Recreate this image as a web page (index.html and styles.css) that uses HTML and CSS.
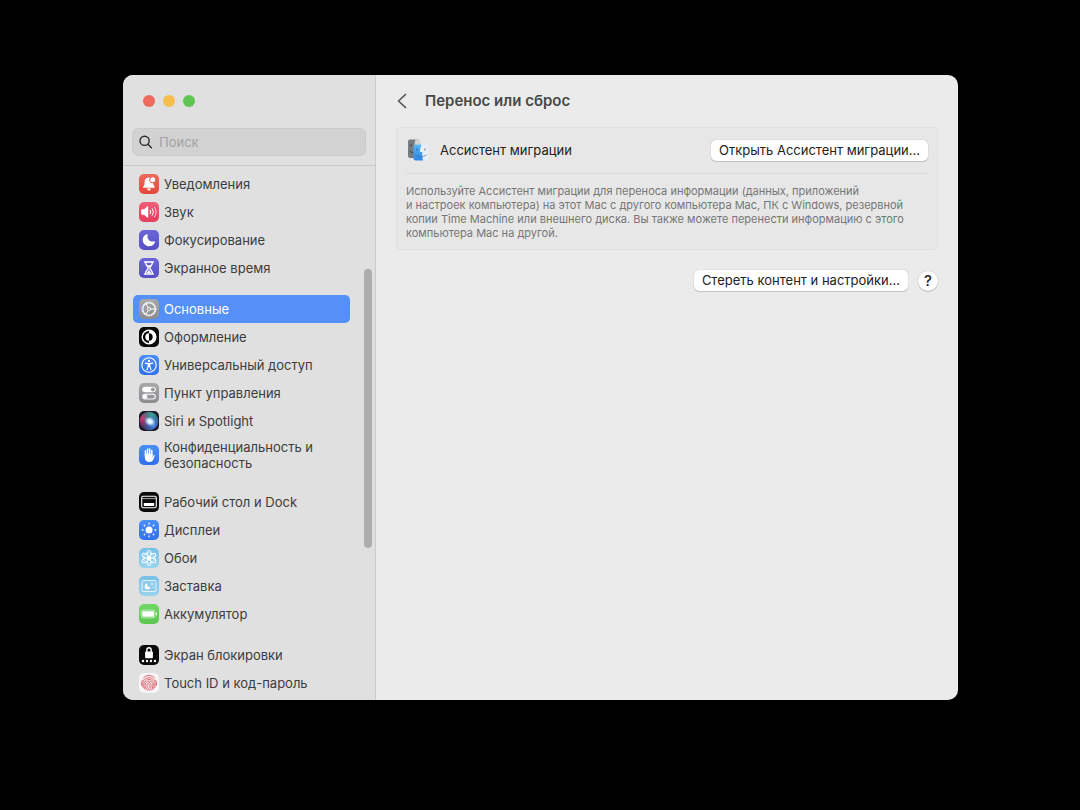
FILE: index.html
```html
<!DOCTYPE html>
<html lang="ru">
<head>
<meta charset="utf-8">
<title>Перенос или сброс</title>
<link rel="stylesheet" href="styles.css">
</head>
<body>
<svg class="defs" width="0" height="0" aria-hidden="true">
  <defs>
    <linearGradient id="face" x1="0" y1="0" x2="0" y2="1"><stop offset="0" stop-color="#56b6f5"/><stop offset="1" stop-color="#2f86e6"/></linearGradient>
    <radialGradient id="siriA" cx="0.15" cy="0.35" r="0.6"><stop offset="0" stop-color="#d8326f"/><stop offset="1" stop-color="#d8326f" stop-opacity="0"/></radialGradient>
    <radialGradient id="siriB" cx="0.75" cy="0.75" r="0.6"><stop offset="0" stop-color="#4a86e8"/><stop offset="1" stop-color="#4a86e8" stop-opacity="0"/></radialGradient>
    <radialGradient id="siriC" cx="0.65" cy="0.15" r="0.6"><stop offset="0" stop-color="#3aa89c"/><stop offset="1" stop-color="#3aa89c" stop-opacity="0"/></radialGradient>
    <radialGradient id="siriD"><stop offset="0" stop-color="#fff"/><stop offset="0.4" stop-color="#d7efff"/><stop offset="1" stop-color="#8fd0ff" stop-opacity="0"/></radialGradient>
  </defs>
</svg>
<div class="window">
  <aside class="sidebar">
    <div class="lights">
      <button class="light red" aria-label="Закрыть"></button>
      <button class="light yellow" aria-label="Свернуть"></button>
      <button class="light green" aria-label="Развернуть"></button>
    </div>
    <label class="search">
      <svg width="14" height="14" viewBox="0 0 14 14" fill="none" stroke="#2b2b2b" stroke-width="1.4" stroke-linecap="round"><circle cx="5.6" cy="5.8" r="4.600"/><path d="M9 9.300 12.400 12.700"/></svg>
      <input type="text" placeholder="Поиск" aria-label="Поиск">
    </label>
    <nav class="list">
      <div class="group">
        <a class="item" href="#"><span class="icon i-red"><svg viewBox="0 0 20 20"><path fill="#fff" d="M9.600 3.400c-2.800.2-4 2.200-4 4.600 0 2.600-.5 3.600-1.500 4.800-.3.4-.1.9.4.9h10.800c.5 0 .7-.5.4-.9-.8-1-1.300-1.900-1.400-3.600a3.400 3.400 0 0 1-4.100-3.400c0-.9.2-1.600.7-2.200a5 5 0 0 0-1.300-.2zM8 14.600h4c-.2 1.200-1 1.900-2 1.900s-1.800-.7-2-1.900z"/><circle cx="13.700" cy="5.700" r="2.500" fill="#fff"/></svg></span><span>Уведомления</span></a>
        <a class="item" href="#"><span class="icon i-pink"><svg viewBox="0 0 20 20" fill="none" stroke="#fff" stroke-width="1" stroke-linecap="round"><path fill="#fff" stroke="none" d="M2.200 8c0-.5.3-.8.8-.8h2L8.300 4.500c.4-.3.9-.1.9.4v10.200c0 .5-.5.7-.9.400L5 12.800H3c-.5 0-.8-.3-.8-.8z"/><path d="M11.200 8.200a3 3 0 0 1 0 3.600M13.300 6.700a5.500 5.500 0 0 1 0 6.600"/><path stroke-opacity=".75" d="M15.500 5.300a8 8 0 0 1 0 9.400"/></svg></span><span>Звук</span></a>
        <a class="item" href="#"><span class="icon i-violet"><svg viewBox="0 0 20 20"><path fill="#fff" d="M8.200 3.900c.3-.1.600.2.500.5-1.200 4.200 1.900 7.900 6.800 7 .4-.1.700.2.500.6a6.300 6.300 0 1 1-7.800-8.100z"/></svg></span><span>Фокусирование</span></a>
        <a class="item" href="#"><span class="icon i-violet"><svg viewBox="0 0 20 20" fill="none" stroke="#fff" stroke-width="1.300" stroke-linecap="round"><path d="M5.500 4h9M5.500 16h9M6.500 4.300c0 3 2.600 4 2.600 5.700s-2.600 2.700-2.600 5.700M13.500 4.300c0 3-2.600 4-2.600 5.700s2.600 2.700 2.600 5.700"/><path fill="#fff" stroke="none" d="M7.600 7.200h4.800L10.300 9.600v3l2 2.400H7.700l2-2.400v-3z"/></svg></span><span>Экранное время</span></a>
      </div>
      <div class="group">
        <a class="item selected" href="#" aria-current="page"><span class="icon i-gray"><svg viewBox="0 0 20 20" fill="none" stroke="#fff"><circle cx="10" cy="10" r="7.100" stroke-width="1" stroke-dasharray="1.100 .79"/><circle cx="10" cy="10" r="6.200" stroke-width="1.100"/><circle cx="10" cy="10" r="1.600" stroke-width=".9"/><path stroke-width="1" d="M11.700 10h4.500M9.100 8.500 6.900 4.700M9.100 11.500l-2.200 3.800"/></svg></span><span>Основные</span></a>
        <a class="item" href="#"><span class="icon i-black"><svg viewBox="0 0 20 20"><circle cx="10" cy="10" r="6.800" fill="#000" stroke="#fff" stroke-width="1.500"/><path fill="#fff" d="M10 3.500a6.500 6.500 0 0 1 0 13v-2.800a3.700 3.700 0 0 0 0-7.400z"/><path fill="#fff" d="M10 6.300a3.700 3.700 0 0 0 0 7.400z"/></svg></span><span>Оформление</span></a>
        <a class="item" href="#"><span class="icon i-blue"><svg viewBox="0 0 20 20" fill="none" stroke="#fff"><circle cx="10" cy="10" r="7.200" stroke-width="1.100"/><circle cx="10" cy="6" r="1.200" fill="#fff" stroke="none"/><path stroke-width="1.200" stroke-linecap="round" stroke-linejoin="round" d="M6.300 8.100 9 8.700h2l2.700-.6M9.200 8.700v2.700l-1.200 3.400M10.800 8.700v2.700l1.200 3.400M10 9v2.300"/></svg></span><span>Универсальный доступ</span></a>
        <a class="item" href="#"><span class="icon i-gray"><svg viewBox="0 0 20 20"><rect x="3.200" y="3.700" width="13.600" height="5.600" rx="2.800" fill="#fff"/><circle cx="13.800" cy="6.500" r="1.900" fill="#98989b"/><rect x="3.700" y="11.200" width="12.600" height="4.800" rx="2.400" fill="none" stroke="#fff" stroke-width="1.100"/><circle cx="6.300" cy="13.600" r="2.200" fill="#fff"/></svg></span><span>Пункт управления</span></a>
        <a class="item" href="#"><span class="icon i-siri"><svg viewBox="0 0 20 20"><circle cx="10" cy="10" r="9.300" fill="#2c3358"/><circle cx="10" cy="10" r="9.300" fill="url(#siriA)"/><circle cx="10" cy="10" r="9.300" fill="url(#siriC)"/><circle cx="10" cy="10" r="9.300" fill="url(#siriB)"/><ellipse cx="11" cy="10.500" rx="6" ry="4.800" transform="rotate(25 11 10.500)" fill="url(#siriD)"/></svg></span><span>Siri и Spotlight</span></a>
        <a class="item tall" href="#"><span class="icon i-blue"><svg viewBox="0 0 20 20" fill="none" stroke="#fff" stroke-linecap="round"><path stroke-width="1.500" d="M6.500 10V5.800M8.600 9V4.100M10.700 9V4.100M12.800 10V5.500"/><path fill="#fff" stroke="none" d="M5.800 8.800h7.800v3.400l.9-1.800c.4-.7 1.500-.3 1.200.6l-1.700 4c-.6 1.300-1.700 2-3.500 2-3 0-4.700-1.500-4.700-4.700z"/></svg></span><span>Конфиденциальность и безопасность</span></a>
      </div>
      <div class="group">
        <a class="item" href="#"><span class="icon i-black"><svg viewBox="0 0 20 20"><rect x="2.700" y="4.200" width="14.600" height="11.600" rx="1.500" fill="none" stroke="#fff" stroke-width="1.100"/><path stroke="#fff" stroke-opacity=".7" stroke-width=".9" d="M3 6.600h14"/><rect x="4.800" y="11" width="10.400" height="3" rx=".6" fill="#fff"/></svg></span><span>Рабочий стол и Dock</span></a>
        <a class="item" href="#"><span class="icon i-blue"><svg viewBox="0 0 20 20"><circle cx="10" cy="10" r="3.500" fill="#fff"/><path stroke="#fff" stroke-width="1.300" stroke-linecap="round" d="M10 3.200v.8M10 16v.8M3.200 10h.8M16 10h.8M5.200 5.200l.6.6M14.200 14.200l.6.6M5.200 14.800l.6-.6M14.200 5.800l.6-.6"/></svg></span><span>Дисплеи</span></a>
        <a class="item" href="#"><span class="icon i-sky"><svg viewBox="0 0 20 20" fill="none" stroke="#fff" stroke-width=".9"><circle cx="10" cy="10" r="1.500" fill="#fff"/><ellipse cx="10" cy="5.300" rx="2.100" ry="2.900"/><ellipse cx="10" cy="5.300" rx="2.100" ry="2.900" transform="rotate(60 10 10)"/><ellipse cx="10" cy="5.300" rx="2.100" ry="2.900" transform="rotate(120 10 10)"/><ellipse cx="10" cy="5.300" rx="2.100" ry="2.900" transform="rotate(180 10 10)"/><ellipse cx="10" cy="5.300" rx="2.100" ry="2.900" transform="rotate(240 10 10)"/><ellipse cx="10" cy="5.300" rx="2.100" ry="2.900" transform="rotate(300 10 10)"/><circle cx="10" cy="10" r="5.300" stroke-opacity=".7"/></svg></span><span>Обои</span></a>
        <a class="item" href="#"><span class="icon i-sky"><svg viewBox="0 0 20 20"><rect x="3" y="4.500" width="14" height="11" rx="1" fill="#8fcbea" stroke="#fff" stroke-opacity=".85" stroke-width=".9"/><path fill="#fff" d="M8.300 7.500a2.700 2.700 0 0 0 3.300 3.600 3 3 0 1 1-3.300-3.600z"/><path fill="#fff" d="m13 6.500.4 1.100 1.100.4-1.100.4-.4 1.100-.4-1.100-1.100-.4 1.100-.4zM13.800 10.800h1v1h-1z"/></svg></span><span>Заставка</span></a>
        <a class="item" href="#"><span class="icon i-green"><svg viewBox="0 0 20 20"><rect x="2.200" y="6.100" width="14" height="7.800" rx="2" fill="none" stroke="#fff" stroke-opacity=".7" stroke-width=".8"/><rect x="3.300" y="7.200" width="11.800" height="5.600" rx="1.100" fill="#fff"/><path fill="#fff" d="M17 8.600c1.300.4 1.300 2.400 0 2.800z"/></svg></span><span>Аккумулятор</span></a>
      </div>
      <div class="group">
        <a class="item" href="#"><span class="icon i-black"><svg viewBox="0 0 20 20"><rect x="6.100" y="6.600" width="7.800" height="6.600" rx="1" fill="#fff"/><path fill="none" stroke="#fff" stroke-width="1.400" d="M7.800 7.300V5.200c0-3.200 4.400-3.200 4.400 0v2.100"/><g fill="#fff"><circle cx="4" cy="16" r="1.200"/><circle cx="8" cy="16" r="1.200"/><circle cx="12" cy="16" r="1.200"/><circle cx="16" cy="16" r="1.200"/></g></svg></span><span>Экран блокировки</span></a>
        <a class="item" href="#"><span class="icon i-white"><svg viewBox="0 0 20 20" fill="none" stroke="#dd6b78" stroke-width="1" stroke-linecap="round"><path d="M4.500 4.700a7.500 7.500 0 0 1 11 0M2.800 12.500c-.8-2.500-.2-4.200.7-5.500M17.200 12.500c.8-2.500.2-4.200-.7-5.500M4.200 14.500c-2-6 1.500-9.700 5.800-9.700s7.800 3.700 5.800 9.700M6 16.200C3 10.500 6 6.500 10 6.500s7 4 4 9.700M8 17.100C4.500 12 6.500 8.200 10 8.200s5.500 3.800 2.500 8.900M10.300 17.300C6.500 12.800 8 9.900 10 9.900s3.500 2.900.7 6.700M10 11.600c.3 1.400.2 2.200.8 3"/></svg></span><span>Touch ID и код-пароль</span></a>
      </div>
    </nav>
    <div class="thumb"></div>
  </aside>
  <main class="content">
    <header class="bar">
      <button class="back" aria-label="Назад"><svg width="10" height="16" viewBox="0 0 10 16" fill="none" stroke="#555" stroke-width="1.700" stroke-linecap="round" stroke-linejoin="round"><path d="M8.500 1.500 1.500 8l7 6.500"/></svg></button>
      <h1>Перенос или сброс</h1>
    </header>
    <section class="card">
      <div class="row">
        <svg class="finder" viewBox="0 0 24 24"><path fill="#767b80" d="M4 1.500h8.500v18.500H4.500A2.500 2.500 0 0 1 2 17.500V3.500a2 2 0 0 1 2-2z"/><path fill="#cfd3d6" d="M9.500 1.500H12a2.500 2.500 0 0 1 2.500 2.500v4H8.500c0-2.500.3-4.500 1-6.500z"/><path stroke="#3c4043" stroke-width="1" stroke-linecap="round" d="M5.200 6.300v1.700"/><path fill="none" stroke="#3c4043" stroke-width=".8" d="M3.600 13c1 1 2 1.500 3.400 1.800"/><rect x="9" y="6.500" width="13.500" height="16" rx="2.500" fill="#e9eff6"/><path fill="url(#face)" d="M10 6.500h5.500c-1 2.600-1.500 5-1.600 7.500h2.300c0 3 .2 5.500.8 8.500H10A2.500 2.500 0 0 1 7.500 20V9A2.500 2.500 0 0 1 10 6.500z"/><path stroke="#1b62b4" stroke-width=".9" stroke-linecap="round" d="M11 10.800v1.500"/><path stroke="#5b6f88" stroke-width=".9" stroke-linecap="round" d="M19 10.800v1.500"/><path fill="none" stroke="#3a6ca8" stroke-width=".7" stroke-linecap="round" d="M10 17c2.800 2.300 7.500 2.300 10.300 0"/></svg>
        <span class="name">Ассистент миграции</span>
        <button class="push">Открыть Ассистент миграции…</button>
      </div>
      <p class="note">Используйте Ассистент миграции для переноса информации (данных, приложений<br>и настроек компьютера) на этот Mac с другого компьютера Mac, ПК с Windows, резервной<br>копии Time Machine или внешнего диска. Вы также можете перенести информацию с этого<br>компьютера Mac на другой.</p>
    </section>
    <footer class="actions">
      <button class="push">Стереть контент и настройки…</button>
      <button class="help" aria-label="Справка">?</button>
    </footer>
  </main>
</div>
</body>
</html>
```
FILE: styles.css
```css
* { box-sizing: border-box; }
body {
  margin: 0;
  min-height: 100vh;
  padding: 75px 122px 110px 123px;
  display: flex;
  background: #000;
  color: #3c3c3c;
  font: 13px/16px Inter, "Noto Sans", sans-serif;
}
.defs { position: absolute; }
button { border: 0; padding: 0; font: inherit; color: inherit; background: none; }
.window {
  flex: 1;
  display: flex;
  border-radius: 10px;
  overflow: hidden;
  background: #ebebeb;
}
.sidebar {
  position: relative;
  width: 253px;
  flex: none;
  display: flex;
  flex-direction: column;
  background: #e0e0e0;
  border-right: 1px solid #cbcbcb;
}
.lights { display: flex; gap: 8px; padding: 20px 20px 21px; }
.light { width: 12px; height: 12px; border-radius: 50%; }
.red { background: #ec6a5e; }
.yellow { background: #f4bf4f; }
.green { background: #61c554; }
.search {
  display: flex;
  align-items: center;
  gap: 6px;
  height: 28px;
  margin: 0 9px;
  padding: 0 6px;
  border: 1px solid #cbcbcb;
  border-radius: 6px;
  background: #d2d2d2;
}
.search input {
  flex: 1;
  min-width: 0;
  border: 0;
  padding: 0;
  outline: 0;
  background: none;
  font: inherit;
  color: #3c3c3c;
}
.search input::placeholder { color: #a2a2a2; opacity: 1; }
.list {
  flex: 1;
  display: flex;
  flex-direction: column;
  gap: 13px;
  margin-top: 9px;
  padding: 4px 25px 3px 10px;
  border-top: 1px solid #c9c9c9;
}
.item {
  display: flex;
  align-items: center;
  gap: 5px;
  height: 28px;
  padding: 0 6px;
  border-radius: 5px;
  color: inherit;
  text-decoration: none;
}
.tall { height: 40px; }
.selected { background: #5590f6; color: #fff; }
.icon { width: 20px; height: 20px; flex: none; border-radius: 5px; overflow: hidden; }
.icon svg { display: block; width: 20px; height: 20px; }
.i-red { background: linear-gradient(#ee6a5e, #e4483c); }
.i-pink { background: linear-gradient(#ee5f78, #e43d5c); }
.i-violet { background: linear-gradient(#6c66d8, #5450c4); }
.i-gray { background: linear-gradient(#a8a8ab, #8c8c90); }
.i-black { background: #0a0a0a; }
.i-blue { background: linear-gradient(#4a8ef8, #3170ee); }
.i-siri { background: #1c1c28; }
.i-sky { background: linear-gradient(#78c0e8, #98d3ee); }
.i-green { background: linear-gradient(#72d765, #5cc650); }
.i-white { background: #f6f4f4; }
.thumb {
  position: absolute;
  top: 194px;
  right: 3px;
  width: 8px;
  height: 279px;
  border-radius: 4px;
  background: #adadad;
}
.content { flex: 1; min-width: 0; padding: 0 20px; }
.bar { display: flex; align-items: center; gap: 18px; height: 52px; }
.back { display: flex; justify-content: flex-end; width: 11px; }
h1 { margin: 0; font-size: 15px; line-height: 20px; font-weight: 600; color: #484848; }
.card {
  padding: 0 9px 9px;
  border: 1px solid #e0e0e0;
  border-radius: 4px;
  background: #e7e7e7;
}
.row {
  display: flex;
  align-items: center;
  height: 46px;
  padding-bottom: 1px;
  border-bottom: 1px solid #dadada;
}
.finder { width: 24px; height: 24px; margin-right: 10px; }
.name { flex: 1; color: #222; }
.push {
  height: 21px;
  padding: 0 8px 1px;
  border-radius: 5px;
  background: #fff;
  color: #222;
  box-shadow: 0 0 1px rgba(0, 0, 0, .3), 0 1px 1px rgba(0, 0, 0, .15);
}
.note { margin: 10px 0 0; font-size: 11px; line-height: 14px; color: #767676; }
.actions { display: flex; justify-content: flex-end; align-items: center; gap: 10px; margin-top: 20px; }
.help {
  width: 20px;
  height: 20px;
  border-radius: 50%;
  background: #fff;
  color: #222;
  font-size: 15px;
  font-weight: 500;
  box-shadow: 0 0 1px rgba(0, 0, 0, .3), 0 1px 1px rgba(0, 0, 0, .15);
}
```
